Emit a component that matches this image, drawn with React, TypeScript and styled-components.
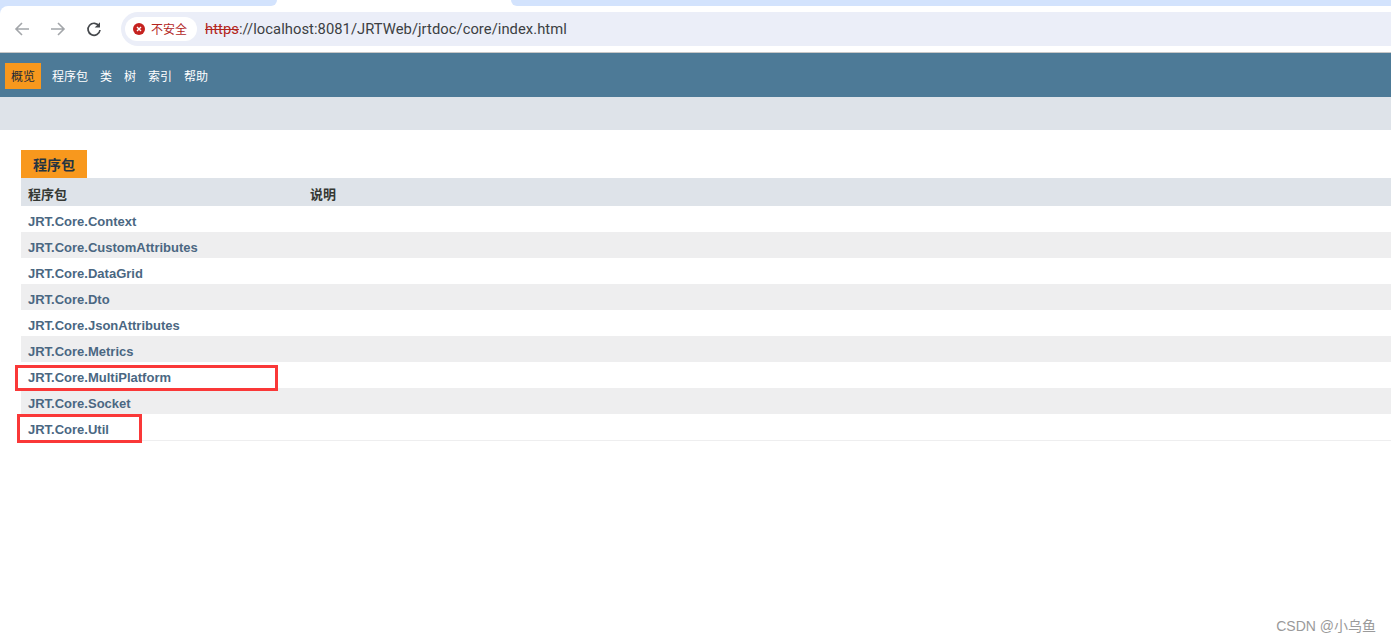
import React from "react";
import styled, { createGlobalStyle } from "styled-components";

const Global = createGlobalStyle`
  html, body { margin: 0; padding: 0; background: #fff; height: 100%; overflow: hidden; }
  body { font-family: "Liberation Sans", "Noto Sans CJK SC", sans-serif; }
  #root { height: 100%; }
`;

const Page = styled.div`
  position: relative;
  width: 1391px;
  height: 642px;
  overflow: hidden;
  background: #fff;
`;

const BrowserChrome = styled.header`
  background: #d3e3fd;
`;

const TabStrip = styled.div`
  height: 6px;
  background: #fff;
  display: flex;
`;

const InactiveTab = styled.div<{ $side: "left" | "right" }>`
  height: 6px;
  background: #d3e3fd;
  width: ${p => (p.$side === "left" ? "277px" : "auto")};
  flex: ${p => (p.$side === "left" ? "none" : "1")};
  margin-left: ${p => (p.$side === "left" ? "0" : "234px")};
  border-radius: ${p => (p.$side === "left" ? "0 0 7px 0" : "0 0 0 7px")};
`;

const Toolbar = styled.div`
  height: 46px;
  background: #fff;
  border-radius: 8px 0 0 0;
  border-bottom: 1px solid #c7c7c7;
  display: flex;
  align-items: center;
  padding-left: 14px;
`;

const NavIcon = styled.svg`
  width: 16px;
  height: 16px;
  margin-right: 20px;
  flex: none;
`;

const Omnibox = styled.div`
  flex: 1;
  height: 34px;
  margin-left: -1px;
  background: #ebeef8;
  border-radius: 17px 0 0 17px;
  display: flex;
  align-items: center;
  padding-left: 4px;
`;

const Chip = styled.div`
  height: 24px;
  width: 72px;
  background: #fff;
  border-radius: 12px;
  display: flex;
  align-items: center;
  padding-left: 8px;
  box-sizing: border-box;
  gap: 6px;
  font-size: 12px;
  color: #b3261e;
  font-family: "Noto Sans CJK SC", sans-serif;
  white-space: nowrap;
`;

const ChipLabel = styled.span`
  margin-top: -2px;
`;

const Url = styled.div`
  margin-left: 8px;
  font-family: Roboto, "Liberation Sans", sans-serif;
  font-size: 14.75px;
  color: #3c3f43;
  letter-spacing: 0.05px;
`;

const Struck = styled.span`
  color: #b3261e;
  text-decoration: line-through;
`;

const TopNav = styled.nav`
  height: 44px;
  box-sizing: border-box;
  padding: 2px 0 0 5px;
  background: #4d7a97;
  display: flex;
  align-items: center;
  font-family: "Noto Sans CJK SC", sans-serif;
  font-size: 12px;
`;

const NavItem = styled.span`
  color: #fff;
  margin: -2px 12px 0 0;
`;

const ActiveNavItem = styled.span`
  width: 36px;
  height: 26px;
  box-sizing: border-box;
  padding-bottom: 2px;
  margin-right: 11px;
  display: flex;
  align-items: center;
  justify-content: center;
  background: #f8981d;
  color: #1d2a36;
`;

const SubNav = styled.div`
  height: 33px;
  background: #dee3e9;
`;

const Content = styled.main`
  padding: 20px 0 0 21px;
`;

const Caption = styled.div`
  width: 66px;
  height: 28px;
  box-sizing: border-box;
  padding-left: 12px;
  background: #f8981d;
  color: #253441;
  font-family: "Noto Sans CJK SC", sans-serif;
  font-size: 14px;
  font-weight: 700;
  display: flex;
  align-items: center;
`;

const Table = styled.div`
  border-bottom: 1px solid #eeeeef;
`;

const HeadRow = styled.div`
  height: 28px;
  box-sizing: border-box;
  padding: 3px 0 0 7px;
  background: #dee3e9;
  display: flex;
  align-items: center;
  color: #353833;
  font-family: "Noto Sans CJK SC", sans-serif;
  font-size: 13px;
  font-weight: 700;
`;

const HeadCell = styled.span<{ $w?: number }>`
  width: ${p => (p.$w ? `${p.$w}px` : "auto")};
`;

const Row = styled.div<{ $alt: boolean }>`
  height: 26px;
  box-sizing: border-box;
  padding: 4px 0 0 7px;
  background: ${p => (p.$alt ? "#eeeeef" : "#fff")};
  display: flex;
  align-items: center;
`;

const PkgLink = styled.a`
  color: #4a6782;
  font-size: 13px;
  font-weight: 700;
  text-decoration: none;
`;

const Annotation = styled.div<{ $x: number; $y: number; $w: number; $h: number }>`
  position: absolute;
  left: ${p => p.$x}px;
  top: ${p => p.$y}px;
  width: ${p => p.$w}px;
  height: ${p => p.$h}px;
  border: 3px solid #fa3838;
  box-sizing: border-box;
`;

const Watermark = styled.div`
  position: absolute;
  right: 15px;
  top: 617px;
  font-family: "Liberation Sans", "Noto Sans CJK SC", sans-serif;
  font-size: 14px;
  line-height: 18px;
  color: #9a9a9a;
`;

const packages = [
  "JRT.Core.Context",
  "JRT.Core.CustomAttributes",
  "JRT.Core.DataGrid",
  "JRT.Core.Dto",
  "JRT.Core.JsonAttributes",
  "JRT.Core.Metrics",
  "JRT.Core.MultiPlatform",
  "JRT.Core.Socket",
  "JRT.Core.Util",
];

const navItems = ["程序包", "类", "树", "索引", "帮助"];

export default function App() {
  return (
    <Page>
      <Global />
      <BrowserChrome>
        <TabStrip>
          <InactiveTab $side="left" />
          <InactiveTab $side="right" />
        </TabStrip>
        <Toolbar>
          <NavIcon viewBox="0 0 16 16" fill="none" stroke="#a3a6aa" strokeWidth="1.6">
            <path d="M15 8H2M8 2L2 8l6 6" />
          </NavIcon>
          <NavIcon viewBox="0 0 16 16" fill="none" stroke="#a3a6aa" strokeWidth="1.6">
            <path d="M1 8h13M8 2l6 6-6 6" />
          </NavIcon>
          <NavIcon viewBox="0 0 16 16" fill="none" stroke="#45484c" strokeWidth="1.7">
            <path d="M13.2 5.2A6 6 0 1 0 14 9" />
            <path d="M14 1.2v5.3H8.7z" fill="#45484c" stroke="none" />
          </NavIcon>
          <Omnibox>
            <Chip>
              <svg width="12" height="12" viewBox="0 0 12 12">
                <circle cx="6" cy="6" r="6" fill="#c5221f" />
                <path d="M4 4l4 4M8 4l-4 4" stroke="#fff" strokeWidth="1.4" />
              </svg>
              <ChipLabel>不安全</ChipLabel>
            </Chip>
            <Url>
              <Struck>https</Struck>://localhost:8081/JRTWeb/jrtdoc/core/index.html
            </Url>
          </Omnibox>
        </Toolbar>
      </BrowserChrome>
      <TopNav>
        <ActiveNavItem>概览</ActiveNavItem>
        {navItems.map(n => (
          <NavItem key={n}>{n}</NavItem>
        ))}
      </TopNav>
      <SubNav />
      <Content>
        <Caption>程序包</Caption>
        <Table>
          <HeadRow>
            <HeadCell $w={282}>程序包</HeadCell>
            <HeadCell>说明</HeadCell>
          </HeadRow>
          {packages.map((p, i) => (
            <Row key={p} $alt={i % 2 === 1}>
              <PkgLink href="#">{p}</PkgLink>
            </Row>
          ))}
        </Table>
      </Content>
      <Annotation $x={15} $y={365} $w={263} $h={26} />
      <Annotation $x={17} $y={414} $w={125} $h={29} />
      <Watermark>CSDN @小乌鱼</Watermark>
    </Page>
  );
}
